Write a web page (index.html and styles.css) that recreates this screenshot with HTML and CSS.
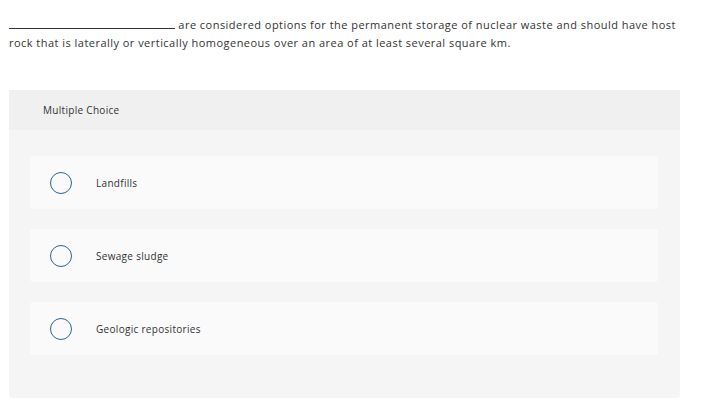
FILE: index.html
```html
<!DOCTYPE html>
<html>
<head>
<meta charset="utf-8">
<link rel="stylesheet" href="styles.css">
</head>
<body>
<div class="page">
  <p class="question"><span class="blank"></span> are considered options for the permanent storage of nuclear waste and should have host rock that is laterally or vertically homogeneous over an area of at least several square km.</p>
  <div class="panel">
    <div class="panel-header">Multiple Choice</div>
    <div class="panel-body">
      <div class="option"><span class="radio"></span><span class="label">Landfills</span></div>
      <div class="option"><span class="radio"></span><span class="label">Sewage sludge</span></div>
      <div class="option"><span class="radio"></span><span class="label">Geologic repositories</span></div>
    </div>
  </div>
</div>
</body>
</html>
```
FILE: styles.css
```css
html, body {
  margin: 0;
  padding: 0;
  background: #fff;
}
body {
  font-family: "Open Sans", "Liberation Sans", Arial, sans-serif;
  color: #333;
  letter-spacing: 0.3px;
}
.page {
  padding: 16px 37px 0 9px;
}
.question {
  margin: 0;
  font-size: 11px;
  line-height: 18px;
  letter-spacing: 0.47px;
  color: #333;
}
.blank {
  display: inline-block;
  width: 166px;
  border-bottom: 1px solid #333;
  vertical-align: baseline;
  height: 10px;
}
.panel {
  margin-top: 38px;
  background: #f5f5f5;
  border-radius: 0 0 3px 3px;
}
.panel-header {
  background: #f0f0f0;
  height: 40px;
  display: flex;
  align-items: center;
  padding-left: 34px;
  font-size: 10px;
  color: #333;
}
.panel-body {
  padding: 26px 22px 43px 21px;
  display: flex;
  flex-direction: column;
  gap: 20px;
}
.option {
  background: #fafafa;
  border-radius: 3px;
  height: 53px;
  display: flex;
  align-items: center;
  padding-left: 20px;
}
.radio {
  width: 20px;
  height: 20px;
  border: 1.5px solid #2d6394;
  border-radius: 50%;
  box-sizing: content-box;
  flex: none;
}
.label {
  margin-left: 24px;
  font-size: 10px;
  color: #333;
}
```
